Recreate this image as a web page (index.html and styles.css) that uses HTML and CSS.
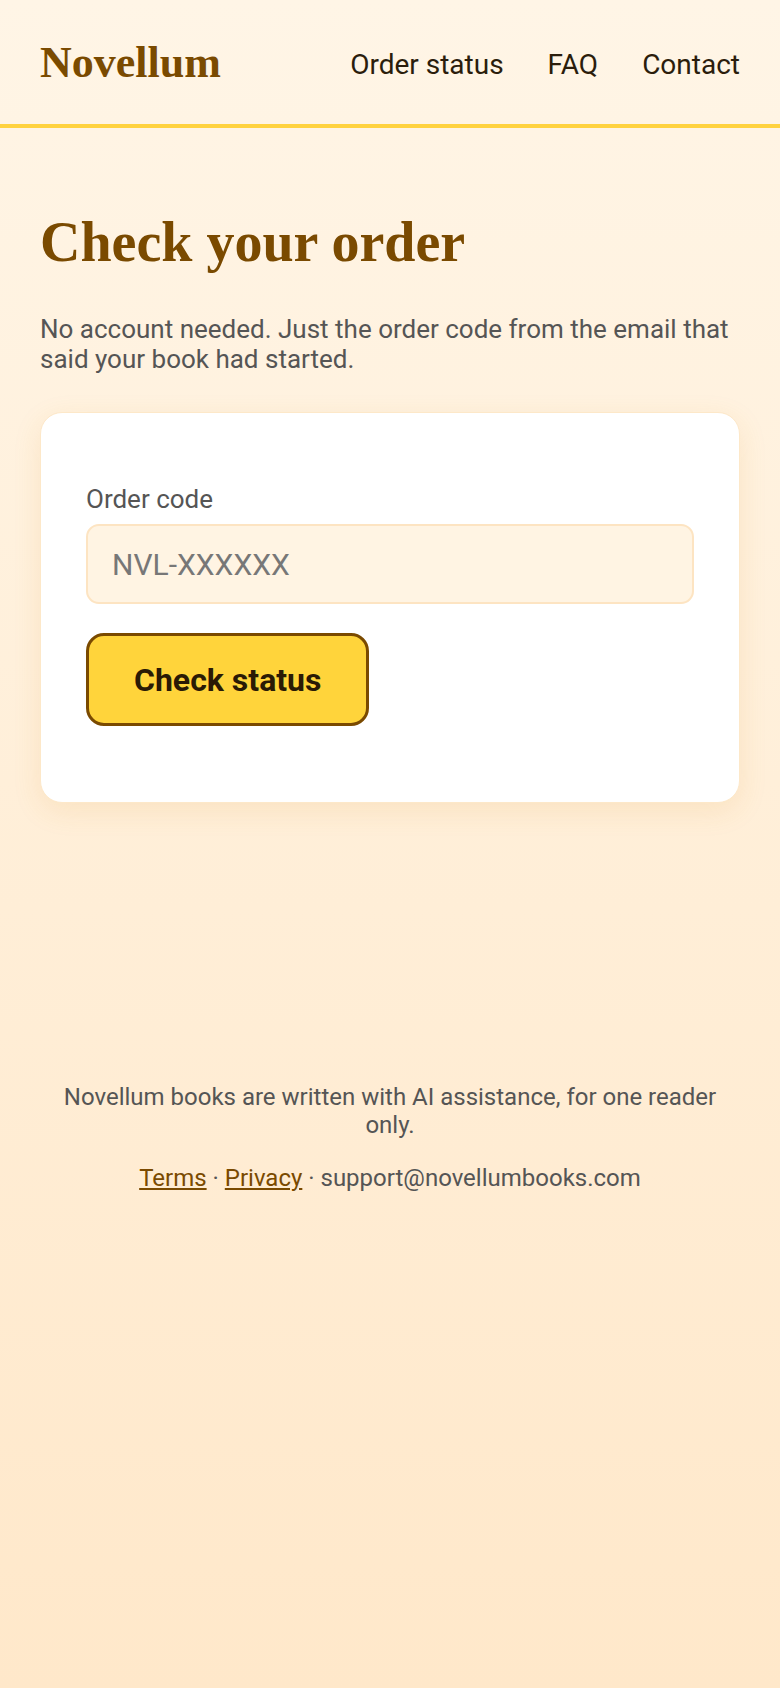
FILE: index.html
```html
<!DOCTYPE html>
<html lang="en">
<head>
<meta charset="utf-8">
<meta name="viewport" content="width=device-width, initial-scale=1">
<title>Novellum — Check your order</title>
<link rel="stylesheet" href="styles.css">
</head>
<body>
<header class="site-header">
  <a class="logo" href="#">Novellum</a>
  <nav class="nav">
    <a href="#">Order status</a>
    <a href="#">FAQ</a>
    <a href="#">Contact</a>
  </nav>
</header>
<main class="main">
  <h1 class="title">Check your order</h1>
  <p class="lead">No account needed. Just the order code from the email that said your book had started.</p>
  <form class="card">
    <label class="label" for="code">Order code</label>
    <input class="input" id="code" type="text" placeholder="NVL-XXXXXX">
    <button class="button" type="button">Check status</button>
  </form>
</main>
<footer class="footer">
  <p class="footer-note">Novellum books are written with AI assistance, for one reader only.</p>
  <p class="footer-links"><a href="#">Terms</a> · <a href="#">Privacy</a> · support@novellumbooks.com</p>
</footer>
</body>
</html>
```

FILE: styles.css
```css
html {
  background: #ffe8ca;
}
body {
  margin: 0;
  min-height: 1688px;
  background: linear-gradient(180deg, #fff5e6 0%, #ffe8ca 100%);
  font-family: Roboto, "Liberation Sans", Arial, sans-serif;
  color: #555555;
}
a {
  color: inherit;
  text-decoration: none;
}
.site-header {
  box-sizing: border-box;
  height: 128px;
  padding: 0 40px;
  display: flex;
  align-items: center;
  justify-content: space-between;
  border-bottom: 4px solid #ffd23f;
}
.logo {
  font-family: "Liberation Serif", "Times New Roman", serif;
  font-weight: 700;
  font-size: 44px;
  color: #7a4a00;
}
.nav {
  display: flex;
  gap: 44px;
  margin-top: 4px;
  font-size: 28px;
  color: #2b1d0c;
}
.main {
  padding: 82px 40px 0;
}
.title {
  margin: 0;
  font-family: "Liberation Serif", "Times New Roman", serif;
  font-weight: 700;
  font-size: 56px;
  line-height: normal;
  color: #7a4a00;
}
.lead {
  margin: 40px 0 0;
  font-size: 26px;
  line-height: normal;
  color: #555555;
}
.card {
  margin: 38px 0 0;
  background: #ffffff;
  border: 1px solid #fde8c9;
  border-radius: 22px;
  padding: 71px 45px 76px;
  box-shadow: 0 8px 28px rgba(214, 150, 40, 0.13);
  display: flex;
  flex-direction: column;
  align-items: flex-start;
}
.label {
  font-size: 26px;
  line-height: normal;
  color: #555555;
}
.input {
  box-sizing: border-box;
  margin-top: 10px;
  width: 100%;
  height: 80px;
  padding: 0 24px;
  background: #fff4e3;
  border: 2px solid #fde4c2;
  border-radius: 13px;
  font-family: Roboto, "Liberation Sans", Arial, sans-serif;
  font-size: 30px;
  color: #333333;
  outline: none;
}
.input::placeholder {
  color: #777777;
}
.button {
  box-sizing: border-box;
  margin-top: 29px;
  height: 93px;
  padding: 0 45px;
  background: #ffd43b;
  border: 3px solid #7a4a00;
  border-radius: 18px;
  font-family: Roboto, "Liberation Sans", Arial, sans-serif;
  font-weight: 700;
  font-size: 32px;
  color: #2a1a05;
  cursor: pointer;
}
.footer {
  margin-top: 280px;
  padding: 0 40px;
  text-align: center;
  font-size: 24px;
  line-height: normal;
  color: #555555;
}
.footer-note {
  margin: 0;
}
.footer-links {
  margin: 25px 0 0;
}
.footer-links a {
  color: #7a4a00;
  text-decoration: underline;
}
```
